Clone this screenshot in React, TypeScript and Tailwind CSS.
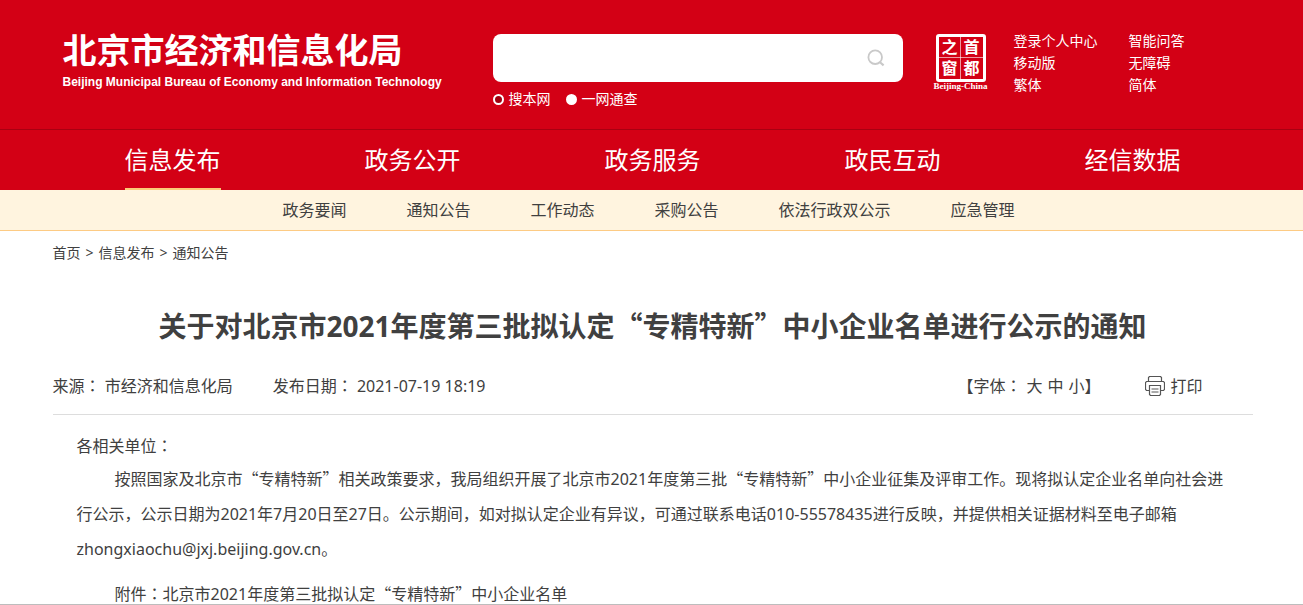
import React, { useState } from 'react';

const navItems = ['信息发布', '政务公开', '政务服务', '政民互动', '经信数据'];

const subNavItems = ['政务要闻', '通知公告', '工作动态', '采购公告', '依法行政双公示', '应急管理'];

const userLinks = ['登录个人中心', '智能问答', '移动版', '无障碍', '繁体', '简体'];

const searchScopes = [
    { value: 'site', label: '搜本网' },
    { value: 'all', label: '一网通查' },
];

// Full-width quotation marks only come from the CJK face
const Quoted = ({ children }: { children: React.ReactNode }) => (
    <>
        <span className="font-['Noto_Sans_CJK_SC',sans-serif] leading-none">“</span>
        {children}
        <span className="font-['Noto_Sans_CJK_SC',sans-serif] leading-none">”</span>
    </>
);

// Centred colon, as the traditional face draws it
const Colon = () => (
    <span lang="zh-TW" className="font-['Noto_Sans_CJK_TC',sans-serif] leading-none">
        ：
    </span>
);

const SearchIcon = () => (
    <svg width="18" height="18" viewBox="0 0 18 18" fill="none" stroke="#c9c9c9" strokeWidth="1.8">
        <circle cx="8.2" cy="8.2" r="6.8" />
        <path d="M13 13.2l3.6 3.2" strokeWidth="2.2" />
    </svg>
);

const PrinterIcon = () => (
    <svg width="20" height="20" viewBox="0 0 20 20" fill="none" stroke="#555555" strokeWidth="1.2">
        <path d="M3.5 5v-3.5l1-1h11l1 1V5" />
        <path d="M4.5 14.5h-3l-1-1v-7l1-1h17l1 1v7l-1 1h-3" />
        <path d="M4.5 9.5h11v9l-1 1h-9l-1-1z" />
        <path d="M6.5 13h7M6.5 16h7" stroke="#aaaaaa" strokeWidth="2" />
    </svg>
);

const CapitalWindowSeal = () => (
    <a href="#" className="flex w-[50px] flex-col items-center text-white">
        <span className="relative grid h-12 w-[50px] grid-cols-2 rounded-[3px] border-3 border-white">
            <span className="absolute top-0 left-[21px] h-full w-px bg-white/60" />
            <span className="absolute top-[20px] left-0 h-px w-full bg-white/60" />
            {['之', '首', '窗', '都'].map((char) => (
                <span key={char} className="h-[21px] text-center text-base leading-5 font-bold">
                    {char}
                </span>
            ))}
        </span>
        <span className="font-['Liberation_Serif',serif] text-[9px] leading-[9px] font-bold whitespace-nowrap">
            Beijing-China
        </span>
    </a>
);

const Header = () => {
    const [scope, setScope] = useState('all');

    return (
        <header className="bg-[#d30015] text-white">
            <div className="border-b border-[#a90011]">
                <div className="mx-auto flex h-[129px] max-w-[1202px] items-start pt-[34px] pl-0.5">
                    <a href="#" className="w-[440px] shrink-0 pl-2.5">
                        <span className="block text-[34px] leading-8 font-bold">北京市经济和信息化局</span>
                        <span className="mt-2 block font-['Liberation_Sans',sans-serif] text-[12px] leading-4 font-bold whitespace-nowrap">
                            Beijing Municipal Bureau of Economy and Information Technology
                        </span>
                    </a>

                    <form className="w-[410px]" onSubmit={(e) => e.preventDefault()}>
                        <div className="flex h-12 items-center rounded-lg bg-white pr-[18px]">
                            <input
                                type="text"
                                aria-label="搜索"
                                className="h-full min-w-0 flex-1 px-4 text-base text-[#404040] outline-none"
                            />
                            <button type="submit" aria-label="搜索">
                                <SearchIcon />
                            </button>
                        </div>
                        <div className="mt-1.5 flex gap-[15px] text-sm leading-[22px]">
                            {searchScopes.map(({ value, label }) => (
                                <label key={value} className="flex items-center gap-[5px]">
                                    <input
                                        type="radio"
                                        name="scope"
                                        value={value}
                                        checked={scope === value}
                                        onChange={() => setScope(value)}
                                        className="size-[11px] appearance-none rounded-full border-2 border-white bg-[#a30010] checked:bg-white"
                                    />
                                    {label}
                                </label>
                            ))}
                        </div>
                    </form>

                    <div className="ml-[33px]">
                        <CapitalWindowSeal />
                    </div>

                    <ul className="-mt-1 ml-7 grid grid-cols-[115px_auto] text-sm leading-[22px] whitespace-nowrap">
                        {userLinks.map((link) => (
                            <li key={link}>
                                <a href="#">{link}</a>
                            </li>
                        ))}
                    </ul>
                </div>
            </div>

            <nav className="mx-auto flex h-[60px] max-w-[1202px] justify-around pl-0.5 text-2xl">
                {navItems.map((item, i) => (
                    <a
                        key={item}
                        href="#"
                        className={`border-b-2 leading-[60px] ${i === 0 ? 'border-[#fbcb77]' : 'border-transparent'}`}
                    >
                        {item}
                    </a>
                ))}
            </nav>
        </header>
    );
};

const SubNav = () => (
    <nav className="flex h-[41px] justify-center gap-[60px] border-b border-[#fdcb84] bg-[#fff4df] pr-1.5 text-base leading-10">
        {subNavItems.map((item) => (
            <a key={item} href="#">
                {item}
            </a>
        ))}
    </nav>
);

const ArticleMeta = () => (
    <div className="flex h-[57px] items-center border-b border-[#dddddd] pr-[50px] text-base">
        <span>
            来源
            <Colon /> 市经济和信息化局
        </span>
        <span className="ml-10">
            发布日期
            <Colon /> 2021-07-19 18:19
        </span>
        <div className="ml-auto flex items-center">
            <span>
                【字体
                <Colon />
            </span>
            <div className="ml-[5px] flex gap-[5px]">
                <button type="button">大</button>
                <button type="button">中</button>
                <button type="button">小</button>
            </div>
            】
        </div>
        <button type="button" className="ml-[45px] flex items-center gap-[5px]">
            <PrinterIcon />
            打印
        </button>
    </div>
);

export default function App() {
    return (
        <div
            lang="zh-CN"
            className="border-b border-[#bdbdbd] bg-white font-['Noto_Sans','Noto_Sans_CJK_SC',sans-serif] text-[#404040]"
        >
            <Header />
            <SubNav />
            <main className="mx-auto max-w-[1202px] pl-0.5">
                <div className="flex h-11 items-center gap-[5px] text-sm">
                    <a href="#">首页</a>
                    <span>&gt;</span>
                    <a href="#">信息发布</a>
                    <span>&gt;</span>
                    <a href="#">通知公告</a>
                </div>

                <h1 className="mt-[31px] text-center text-[28px] leading-10 font-bold">
                    关于对北京市2021年度第三批拟认定<Quoted>专精特新</Quoted>中小企业名单进行公示的通知
                </h1>

                <div className="mt-3">
                    <ArticleMeta />
                </div>

                <article className="px-6 pt-[15px] text-base">
                    <p className="leading-8">
                        各相关单位
                        <Colon />
                    </p>
                    <p className="indent-[38px] leading-[35px]">
                        按照国家及北京市<Quoted>专精特新</Quoted>相关政策要求，我局组织开展了北京市2021年度第三批
                        <Quoted>专精特新</Quoted>
                        中小企业征集及评审工作。现将拟认定企业名单向社会进行公示，公示日期为2021年7月20日至27日。公示期间，如对拟认定企业有异议，可通过联系电话010-55578435进行反映，并提供相关证据材料至电子邮箱zhongxiaochu@jxj.beijing.gov.cn。
                    </p>
                    <p className="mt-[17px] indent-[38px] leading-5">
                        附件
                        <Colon />
                        <a href="#">
                            北京市2021年度第三批拟认定<Quoted>专精特新</Quoted>中小企业名单
                        </a>
                    </p>
                </article>
            </main>
        </div>
    );
}
